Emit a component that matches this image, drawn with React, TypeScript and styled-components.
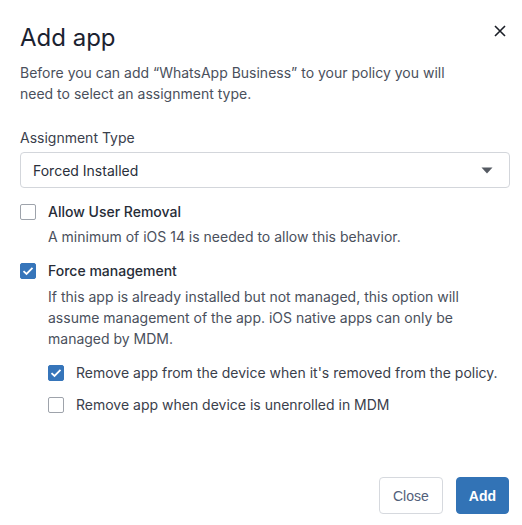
import styled, { createGlobalStyle } from 'styled-components';

const GlobalStyle = createGlobalStyle`
  * {
    box-sizing: border-box;
  }

  body {
    margin: 0;
    background: #ffffff;
    font-family: Inter, "Noto Sans", sans-serif;
  }
`;

const Dialog = styled.div`
  display: flex;
  flex-direction: column;
  width: 522px;
  height: 525px;
  padding: 23px 12px 11px 20px;
  background: #ffffff;
`;

const Header = styled.div`
  display: flex;
  align-items: flex-start;
  justify-content: space-between;
`;

const Title = styled.h2`
  margin: 0;
  font-size: 24px;
  line-height: 29px;
  font-weight: 400;
  color: #1b2230;
`;

const CloseIcon = styled.button`
  display: flex;
  align-items: center;
  justify-content: center;
  width: 20px;
  height: 20px;
  margin-top: -2px;
  padding: 0;
  border: none;
  background: none;
  color: #1b1f27;
`;

const Body = styled.div`
  display: flex;
  flex-direction: column;
  width: 490px;
`;

const Text = styled.p<{ $top?: number; $indent?: number }>`
  margin: ${(p) => p.$top ?? 0}px 0 0 ${(p) => p.$indent ?? 0}px;
  font-size: 14px;
  line-height: 21px;
  color: #4a505c;
`;

const Label = styled.div`
  margin-top: 23px;
  font-size: 14px;
  line-height: 21px;
  color: #3a404c;
`;

const Select = styled.div`
  display: flex;
  align-items: center;
  justify-content: space-between;
  height: 36px;
  margin-top: 4px;
  padding: 0 16px 0 12px;
  border: 1px solid #d3d6db;
  border-radius: 4px;
  font-size: 14px;
  color: #2a303b;
`;

const Row = styled.label<{ $top: number; $indent?: number }>`
  display: flex;
  align-items: center;
  gap: 12px;
  margin: ${(p) => p.$top}px 0 0 ${(p) => p.$indent ?? 0}px;
  font-size: 14px;
  line-height: 21px;
`;

const Box = styled.span<{ $checked?: boolean }>`
  display: flex;
  align-items: center;
  justify-content: center;
  flex: none;
  width: 16px;
  height: 16px;
  border-radius: 2px;
  border: 1px solid ${(p) => (p.$checked ? '#3675ba' : '#9ea3ab')};
  background: ${(p) => (p.$checked ? '#3675ba' : '#ffffff')};
`;

const RowText = styled.span<{ $strong?: boolean }>`
  color: ${(p) => (p.$strong ? '#262c37' : '#3a404b')};
  font-weight: ${(p) => (p.$strong ? 500 : 400)};
`;

const Footer = styled.div`
  display: flex;
  justify-content: flex-end;
  gap: 13px;
  margin-top: auto;
  padding-right: 1px;
`;

const Button = styled.button<{ $primary?: boolean }>`
  height: 37px;
  padding: 0 ${(p) => (p.$primary ? 12 : 13)}px;
  border-radius: 4px;
  border: 1px solid ${(p) => (p.$primary ? '#3273b6' : '#d6d9de')};
  background: ${(p) => (p.$primary ? '#3273b6' : '#ffffff')};
  color: ${(p) => (p.$primary ? '#ffffff' : '#52607a')};
  font-family: "Liberation Sans", Arial, sans-serif;
  font-size: 14px;
  font-weight: ${(p) => (p.$primary ? 700 : 400)};
`;

const Check = () => (
  <svg width="12" height="10" viewBox="0 0 12 10">
    <path d="M1.5 5.2 L4.5 8 L10.5 1.8" fill="none" stroke="#ffffff" strokeWidth="1.8" />
  </svg>
);

const Checkbox = ({ checked }: { checked?: boolean }) => (
  <Box $checked={checked}>{checked && <Check />}</Box>
);

export default function App() {
  return (
    <>
      <GlobalStyle />
      <Dialog>
        <Header>
          <Title>Add app</Title>
          <CloseIcon aria-label="Close">
            <svg width="12" height="12" viewBox="0 0 12 12">
              <path d="M1 1 L11 11 M11 1 L1 11" stroke="currentColor" strokeWidth="1.6" />
            </svg>
          </CloseIcon>
        </Header>
        <Body>
          <Text $top={10}>
            Before you can add “WhatsApp Business” to your policy you will
            <br />
            need to select an assignment type.
          </Text>
          <Label>Assignment Type</Label>
          <Select>
            <span>Forced Installed</span>
            <svg width="12" height="7" viewBox="0 0 12 7">
              <path d="M0.5 0.5 H11.5 L6 6.5 Z" fill="#555a62" />
            </svg>
          </Select>
          <Row $top={13}>
            <Checkbox />
            <RowText $strong>Allow User Removal</RowText>
          </Row>
          <Text $top={4} $indent={28}>
            A minimum of iOS 14 is needed to allow this behavior.
          </Text>
          <Row $top={13}>
            <Checkbox checked />
            <RowText $strong>Force management</RowText>
          </Row>
          <Text $top={5} $indent={28}>
            If this app is already installed but not managed, this option will
            <br />
            assume management of the app. iOS native apps can only be
            <br />
            managed by MDM.
          </Text>
          <Row $top={13} $indent={28}>
            <Checkbox checked />
            <RowText>Remove app from the device when it's removed from the policy.</RowText>
          </Row>
          <Row $top={11} $indent={28}>
            <Checkbox />
            <RowText>Remove app when device is unenrolled in MDM</RowText>
          </Row>
        </Body>
        <Footer>
          <Button>Close</Button>
          <Button $primary>Add</Button>
        </Footer>
      </Dialog>
    </>
  );
}
